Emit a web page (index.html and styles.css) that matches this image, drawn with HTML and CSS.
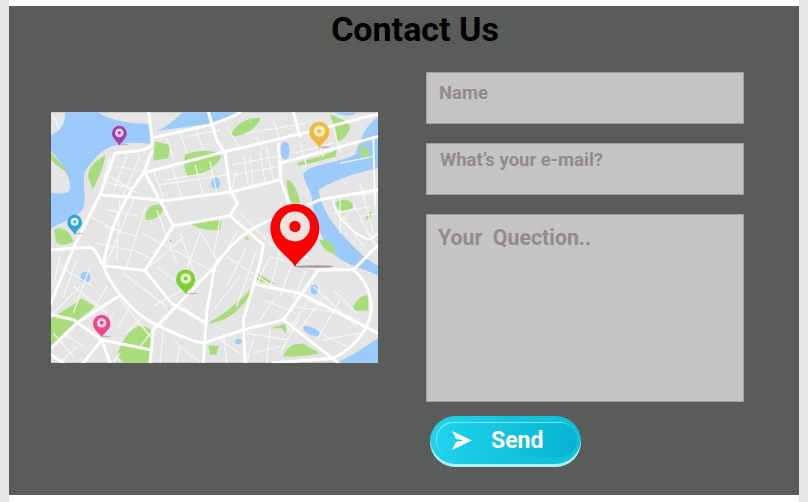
FILE: index.html
```html
<!DOCTYPE html>
<html lang="en">
  <head>
    <meta charset="UTF-8" />
    <meta name="viewport" content="width=device-width, initial-scale=1.0" />
    <title>Contact Us</title>
    <link rel="stylesheet" href="styles.css">
  </head>
  <body>
    <div class="page">
      <div class="panel">
        <h1>Contact Us</h1>
        <div class="columns">
          <svg class="map" viewBox="33 37 981 752" aria-label="City map">
            <rect x="33" y="37" width="981" height="752" fill="#e5e5e5" />
            <g fill="#9ccafb">
              <path d="M75 37 C78 70 60 95 33 105 V155 C70 190 95 240 90 270 C85 285 50 282 33 278 V385 C70 365 115 350 130 325 C140 290 125 250 135 215 C165 170 195 140 235 135 C270 125 300 130 330 132 V72 C280 72 215 65 175 37 Z" />
              <path d="M345 95 C385 80 400 60 430 37 H610 C590 50 560 60 520 70 C460 78 400 85 345 95 Z" />
              <path d="M880 37 H950 C940 50 915 50 880 37 Z" />
              <path d="M790 222 C815 190 880 195 945 165 C960 120 980 70 1014 52 V205 C960 215 880 240 835 270 C845 330 880 380 950 450 C970 470 990 485 1014 497 V527 C980 510 920 495 890 470 C850 430 825 380 815 290 C805 260 790 240 790 222 Z" />
              <path d="M880 789 C920 780 960 750 1014 715 V789 Z" />
              <ellipse cx="735" cy="152" rx="14" ry="26" />
              <ellipse cx="527" cy="250" rx="13" ry="18" />
              <ellipse cx="136" cy="532" rx="15" ry="17" />
              <ellipse cx="823" cy="570" rx="11" ry="15" />
              <ellipse cx="815" cy="694" rx="28" ry="11" transform="rotate(25 815 694)" />
              <ellipse cx="595" cy="725" rx="10" ry="8" />
            </g>
            <g fill="#a9dc7d">
              <path d="M575 100 C590 70 630 50 662 55 C650 85 610 110 575 110 Z" />
              <path d="M345 125 L390 135 L385 175 L340 182 Z" />
              <path d="M435 165 C470 150 520 145 545 170 C520 210 480 230 445 230 C430 215 432 190 435 165 Z" />
              <path d="M197 165 C165 185 140 205 145 235 L158 268 C175 240 190 200 197 165 Z" />
              <path d="M33 160 C55 180 75 205 82 220 C60 205 40 190 33 180 Z" />
              <path d="M316 350 C320 320 345 305 372 320 C368 345 345 362 316 360 Z" />
              <path d="M450 372 C490 368 520 360 545 362 L540 392 C510 392 480 390 450 372 Z" />
              <path d="M740 240 C760 240 775 280 780 310 L755 310 C745 285 740 265 740 240 Z" />
              <path d="M770 340 L800 360 L805 410 L785 400 Z" />
              <path d="M838 420 C860 415 885 435 888 465 C865 460 845 445 838 420 Z" />
              <path d="M885 310 C900 295 935 295 940 320 C925 340 895 340 885 310 Z" />
              <path d="M980 345 L996 332 L992 355 L978 360 Z" />
              <path d="M960 140 C975 130 990 150 988 178 C970 175 955 160 960 140 Z" />
              <path d="M770 190 C820 175 860 165 890 150 L888 170 C850 180 810 192 775 198 Z" />
              <path d="M870 45 C885 50 935 65 930 85 C920 110 905 125 890 125 C895 100 880 75 870 45 Z" />
              <path d="M42 390 C65 375 90 395 100 425 C85 435 55 440 48 425 Z" />
              <path d="M33 655 C55 640 95 620 125 595 L165 620 C125 650 80 690 33 740 Z" />
              <path d="M650 518 L705 552 C680 550 660 545 645 538 Z" />
              <path d="M510 665 C560 640 600 600 632 568 C630 600 590 640 550 660 L510 672 Z" />
              <path d="M940 620 C955 590 980 580 985 590 V632 L945 632 Z" />
              <path d="M232 765 C240 740 260 690 300 678 C325 680 345 695 340 720 L325 789 H250 Z" />
              <path d="M505 738 H535 L530 765 H510 Z" />
              <path d="M730 770 C740 740 760 730 790 732 L840 760 C800 770 760 770 730 770 Z" />
              <path d="M690 685 L735 672 L742 705 L725 685 Z" />
              <path d="M382 425 L395 418 L396 426 Z" />
              <path d="M612 418 L622 410 L628 420 Z" />
            </g>
            <g fill="none" stroke="#f7f7f7" stroke-width="3.5">
              <path d="M210 230 L290 280 M150 350 L250 400 M240 300 L230 480 M350 330 L410 490 M430 410 L330 500 M480 400 L420 560 M570 290 L590 210 M630 170 L640 260 M680 140 L700 240 M380 240 L500 220 M600 340 L700 440 M560 470 L700 560 M600 530 L520 630 M760 620 L900 640 M700 600 L660 660 M820 560 L950 680 M100 560 L200 640 M60 500 L160 560 M240 600 L340 720 M420 610 L500 680 M250 520 L380 620 M400 720 L480 789 M620 700 L740 720 M780 650 L720 760 M900 290 L900 400 M960 250 L1000 400 M880 340 L990 320 M440 110 L540 90 M620 100 L800 70 M40 640 L120 560 M850 720 L960 700 M300 740 L340 690 M480 540 L340 620" />
              <path d="M340 215 L370 290 M400 210 L425 295 M465 195 L490 285 M510 185 L530 275 M575 195 L710 170 M580 225 L715 200 M610 165 L625 260 M660 150 L675 250 M360 255 L560 225 M200 330 L300 350 M190 380 L290 410 M170 430 L270 450 M280 300 L200 490 M320 310 L260 500 M305 400 L380 440 M280 450 L340 480" />
              <path d="M420 400 L470 540 M480 395 L530 480 M540 360 L520 470 M350 500 L470 590 M400 450 L510 510 M590 400 L530 500 M620 440 L560 560 M650 450 L590 620 M690 470 L650 555 M720 450 L690 570 M760 480 L720 590 M800 510 L760 600 M690 470 L830 510 M670 600 L770 640" />
              <path d="M800 610 L740 700 M850 590 L780 690 M900 600 L830 720 M800 600 L960 660 M880 570 L950 640 M840 700 L920 740 M640 720 L620 789 M690 690 L680 789 M550 700 L560 789 M420 740 L410 789 M370 700 L360 789 M540 720 L600 760 M640 760 L720 740" />
              <path d="M60 470 L40 560 M110 480 L70 590 M150 500 L100 640 M200 560 L150 650 M70 700 L130 740 M220 640 L180 700 M270 620 L230 690 M310 650 L260 700 M40 700 L100 770 M110 740 L60 789 M240 760 L220 789" />
              <path d="M210 170 L190 240 M260 165 L220 280 M300 170 L250 285 M230 200 L310 215 M205 250 L280 265 M780 130 L800 200 M830 110 L850 170 M880 80 L900 160 M760 160 L880 130 M900 190 L1000 170 M910 350 L970 440 M940 310 L1000 430 M890 290 L1010 280 M960 350 L1014 340 M990 400 L1014 450 M40 50 L60 90 M420 100 L440 160 M380 115 L400 170 M470 95 L490 150 M560 80 L600 145 M650 110 L670 150 M700 60 L720 120" />
            </g>
            <g fill="none" stroke="#fff" stroke-width="9" stroke-linecap="round" stroke-linejoin="round">
              <path d="M33 450 L150 442 C175 450 175 480 190 498 L315 512 L400 378 L570 348 L592 310 L570 265 L555 160 L530 120 L505 37" />
              <path d="M33 610 L100 445 L130 385 L180 285 L225 160 C270 155 320 155 338 135 L326 37" />
              <path d="M190 498 C205 400 240 310 312 218 L335 155" />
              <path d="M315 218 L545 158 L810 95 L1014 42" />
              <path d="M345 112 L500 78 C540 65 575 55 600 37" />
              <path d="M180 285 L380 302 L580 275 L720 240 L722 190 L1014 110" />
              <path d="M760 37 L780 110 M715 130 L722 240 L750 320 L800 470" />
              <path d="M315 218 L400 378" />
              <path d="M570 348 L670 435 L660 490 L610 660 L615 789" />
              <path d="M670 370 L840 300 L1014 270" />
              <path d="M525 495 C575 430 620 390 670 370" />
              <path d="M525 495 L500 640 L490 789" />
              <path d="M525 500 L340 690 L330 789" />
              <path d="M190 498 C210 560 280 640 340 670 C400 700 440 720 490 730 L610 690 L730 660 L835 510 L940 510 L1014 435" />
              <path d="M315 512 L395 610 L490 665" />
              <path d="M650 555 L780 580 L1014 700 M730 660 L895 789" />
              <path d="M940 510 C990 550 1005 620 985 670 C960 720 930 750 880 775 L700 789" />
              <path d="M33 645 L100 660 L185 720 L330 750 M235 590 L110 670 L33 745" />
              <path d="M185 720 L130 789 M185 720 L210 789 M33 765 L70 789" />
            </g>
            <g fill="none" stroke="#fff" stroke-width="5">
              <path d="M880 300 C880 340 930 400 990 420 L1014 400" />
              <path d="M1000 110 L1005 320" />
            </g>
            <g fill="#8a8a8a" opacity="0.5">
              <ellipse cx="250" cy="134" rx="16" ry="2.5" />
              <ellipse cx="852" cy="142" rx="18" ry="2.5" />
              <ellipse cx="115" cy="401" rx="16" ry="2.5" />
              <ellipse cx="455" cy="581" rx="20" ry="2.5" />
              <ellipse cx="197" cy="710" rx="16" ry="2.5" />
            </g>
            <ellipse cx="822" cy="500" rx="58" ry="4" fill="#8f6464" opacity="0.6" />
            <path fill="#a23ea8" d="M238 136 C228 122 216 114 216 100 A22 22 0 0 1 260 100 C260 114 248 122 238 136 Z" />
            <circle cx="238" cy="99" r="13" fill="#e3cde8" /><circle cx="238" cy="99" r="5" fill="#a23ea8" />
            <path fill="#f0b93a" d="M838 143 C826 126 808 116 808 96 A30 30 0 0 1 868 96 C868 116 850 126 838 143 Z" />
            <circle cx="838" cy="94" r="17" fill="#f8ecc4" /><circle cx="838" cy="94" r="6" fill="#f0b93a" />
            <path fill="#2aa5de" d="M104 403 C96 390 82 382 82 367 A22 22 0 0 1 126 367 C126 382 112 390 104 403 Z" />
            <circle cx="104" cy="366" r="12" fill="#d8eef8" /><circle cx="104" cy="366" r="4" fill="#2aa5de" />
            <path fill="#7fd032" d="M437 582 C426 566 408 558 408 538 A29 29 0 0 1 466 538 C466 558 448 566 437 582 Z" />
            <circle cx="437" cy="536" r="16" fill="#e3f3d0" /><circle cx="437" cy="536" r="6" fill="#7fd032" />
            <path fill="#f0468c" d="M185 711 C175 697 159 690 159 671 A26 26 0 0 1 211 671 C211 690 195 697 185 711 Z" />
            <circle cx="185" cy="669" r="14" fill="#fadbe8" /><circle cx="185" cy="669" r="6" fill="#f0468c" />
            <path fill="#fe0000" d="M765 501 C750 470 691 445 691 385 A73.500 73.500 0 0 1 838 385 C838 445 780 470 765 501 Z" />
            <circle cx="765" cy="380" r="45" fill="#efe3e0" /><circle cx="765" cy="380" r="17" fill="#fe0000" />
          </svg>
          <form class="contact-form">
            <input class="field" type="text" placeholder="Name" />
            <input class="field field-email" type="text" placeholder="What’s your e-mail?" />
            <textarea class="field field-question" placeholder="Your  Quection.."></textarea>
            <button class="send" type="button">
              <svg class="send-icon" viewBox="0 0 20 19"><path fill="#fff" d="M0 0 L20 9.500 L0 19 L4 11 L12 9.500 L4 8 Z" /></svg>
              <span>Send</span>
            </button>
          </form>
        </div>
      </div>
    </div>
  </body>
</html>
```

FILE: styles.css
```css
html,
body {
  height: 100%;
}
body {
  margin: 0;
  background-color: #e8e8e8;
  font-family: Roboto, "Liberation Sans", sans-serif;
  overflow: hidden;
}
.page {
  margin: 0 9px;
  height: 502px;
  padding-top: 6px;
  box-sizing: border-box;
  background: white;
}
.panel {
  height: 489px;
  background-color: #5a5c5a;
}
h1 {
  margin: 0;
  padding-left: 22px;
  font-size: 34px;
  line-height: 46px;
  font-weight: 700;
  text-align: center;
  color: #000;
}
.columns {
  display: flex;
  align-items: flex-start;
  padding: 20px 0 0 42px;
}
.map {
  display: block;
  width: 327px;
  height: 251px;
  margin-top: 40px;
  filter: blur(0.4px);
}
.contact-form {
  display: flex;
  flex-direction: column;
  width: 318px;
  margin-left: 48px;
}
.field {
  display: block;
  box-sizing: border-box;
  width: 100%;
  height: 52px;
  margin: 0 0 19px;
  padding: 0 12px 11px;
  border: 1px solid #a0a0a0;
  border-radius: 0;
  background-color: #c4c4c4;
  font-family: Roboto, "Liberation Sans", sans-serif;
  font-size: 18.5px;
  font-weight: 700;
  resize: none;
  outline: none;
}
.field::placeholder {
  color: #948a8c;
  opacity: 1;
}
.field-email {
  padding: 0 13px 19px;
}
.field-question {
  height: 188px;
  margin-bottom: 14px;
  padding: 10px 11px;
  font-size: 21.3px;
}
.send {
  position: relative;
  display: flex;
  align-items: center;
  box-sizing: border-box;
  width: 151px;
  height: 51px;
  margin-left: 4px;
  padding: 0 0 2px 22px;
  border: 0;
  border-radius: 26px;
  background: linear-gradient(100deg, #24d4ec 0%, #14c4de 50%, #10c0da 100%);
  box-shadow: inset 0 -3px 0 #b5edf4;
  color: white;
  font-family: Roboto, "Liberation Sans", sans-serif;
  font-size: 23px;
  font-weight: 700;
  cursor: pointer;
}
.send::before {
  content: "";
  position: absolute;
  top: 7px;
  left: 7px;
  width: 140px;
  height: 34px;
  border-radius: 17px;
  background: linear-gradient(95deg, #1fd3ec 0%, #14c6e0 45%, #06b2cf 100%);
  box-shadow: -1px -1px 0 #7fe6f5;
}
.send-icon,
.send span {
  position: relative;
}
.send-icon {
  width: 20px;
  height: 19px;
  margin-right: 19px;
}
```
